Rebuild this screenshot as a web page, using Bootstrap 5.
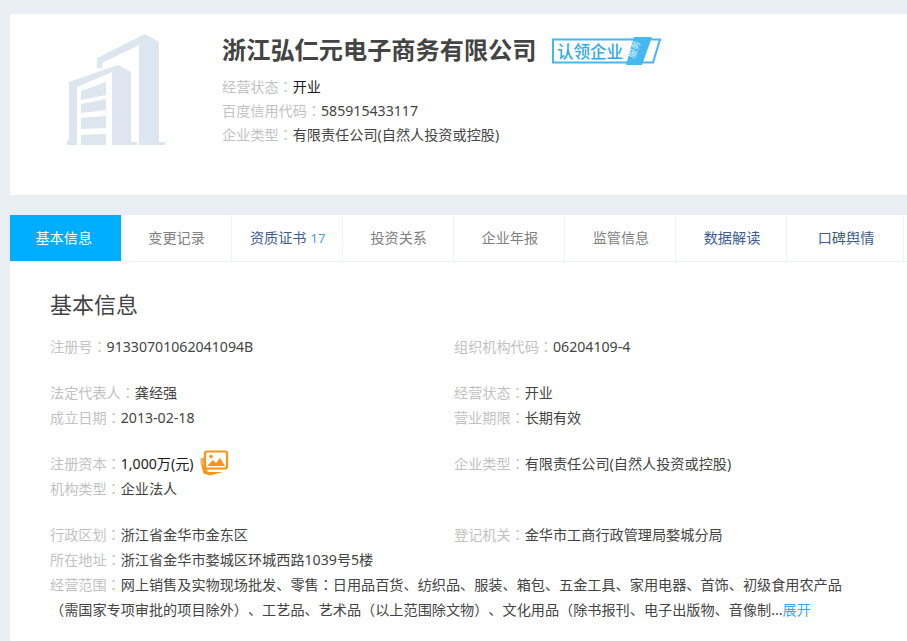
<!DOCTYPE html>
<html>
<head>
<meta charset="utf-8">
<title>浙江弘仁元电子商务有限公司</title>
<link href="https://cdn.jsdelivr.net/npm/bootstrap@5.3.0/dist/css/bootstrap.min.css" rel="stylesheet">
<style>
html,body{height:100%;overflow:hidden}
body{background:#e9eef5;font-family:"Noto Sans","Noto Sans CJK SC",sans-serif;font-size:14.15px;color:#444;line-height:25px;text-spacing-trim:space-all}
.shell{padding:14px 0 0 10px;height:641px;overflow:hidden}
.hero{height:181px;background:#fff;padding:20px 0 0 212px;position:relative}
.hero-logo{position:absolute;left:0;top:0}
.hero-title{font-size:24.2px;font-weight:700;line-height:32px;color:#444;margin:0}
.hero-lines{margin-top:8px;line-height:24px}
.hero-lines>div{height:24px}
.lab{color:#c2c2c2}
.cn{font-family:"Noto Sans CJK TC",sans-serif}
.val-strong{color:#1a1a1a}
.tabbar{margin-top:20px;background:#fff;height:47px;border-bottom:1px solid #eef1f5}
.tabitem{width:111.1px;height:46px;line-height:46px;text-align:center;color:#808080;border-right:1px solid #eff2f6;flex:none;padding-left:2px}
.tabitem.first{width:110.500px;border-right:0;padding:0 3px 0 0}
.tabitem.on{background:#00aeff;color:#fff}
.tabitem.navy{color:#3e5c92}
.tabitem.last{width:116.900px}
.tabcount{color:#4a9ee0;margin-left:4px;font-size:13px}
.sheet{background:#fff;padding:26px 49px 200px 40px}
.sheet-title{font-size:22px;font-weight:400;line-height:32px;color:#444;margin:0 0 14px}
.fact-group{margin-bottom:21px}
.fact-line{height:25px}
.stack{vertical-align:-1px;margin:-6px 0 -6px 5px}
.badge-art{margin-left:15px}
.morelink{color:#3aa6f5;text-decoration:none}
</style>
</head>
<body>
<div class="shell">
  <section class="hero">
    <svg class="hero-logo" width="180" height="150" viewBox="10 14 180 150">
      <g fill="#dde6ee">
        <path d="M97 68V58L145 34l14 8v100h6v3h-26V45L102 63v5z"/>
        <path d="M67 145v-4l2-1V82l49-17 13 7v70h6v3h-25V72L77 87v58z"/>
        <path d="M81 91l25-9v13l-25 5z"/>
        <path d="M81 104l25-5v11l-25 3z"/>
        <path d="M81 118l25-2v12l-25 1z"/>
        <path d="M81 135l25-1v11H81z"/>
      </g>
    </svg>
    <div class="d-flex align-items-center">
      <h1 class="hero-title">浙江弘仁元电子商务有限公司</h1>
      <svg class="badge-art" width="112" height="32" viewBox="0 0 112 32">
        <path d="M2 5.500H109L102 28.500H2z" fill="#fff" stroke="#45b8f2" stroke-width="2"/>
        <path d="M83 3h18L91 31H75z" fill="#45b8f2"/>
        <text x="6" y="23.500" font-size="16.500" font-weight="500" fill="#2fa9ea" font-family="Noto Sans CJK SC">认领企业</text>
        <text font-size="9" fill="#dff3fd" font-family="Noto Sans CJK SC" transform="translate(83 25) rotate(-68)">服务</text>
      </svg>
    </div>
    <div class="hero-lines">
      <div><span class="lab">经营状态<span class="cn">：</span></span><span class="val-strong">开业</span></div>
      <div><span class="lab">百度信用代码<span class="cn">：</span></span>585915433117</div>
      <div><span class="lab">企业类型<span class="cn">：</span></span>有限责任公司(自然人投资或控股)</div>
    </div>
  </section>

  <nav class="tabbar d-flex">
    <div class="tabitem first on">基本信息</div>
    <div class="tabitem">变更记录</div>
    <div class="tabitem navy">资质证书<span class="tabcount">17</span></div>
    <div class="tabitem">投资关系</div>
    <div class="tabitem">企业年报</div>
    <div class="tabitem">监管信息</div>
    <div class="tabitem navy">数据解读</div>
    <div class="tabitem navy last">口碑舆情</div>
  </nav>

  <main class="sheet">
    <h2 class="sheet-title">基本信息</h2>

    <div class="row g-0 fact-group">
      <div class="col-6 fact-line"><span class="lab">注册号<span class="cn">：</span></span>91330701062041094B</div>
      <div class="col-6 fact-line"><span class="lab">组织机构代码<span class="cn">：</span></span>06204109-4</div>
    </div>

    <div class="row g-0 fact-group">
      <div class="col-6 fact-line"><span class="lab">法定代表人<span class="cn">：</span></span>龚经强</div>
      <div class="col-6 fact-line"><span class="lab">经营状态<span class="cn">：</span></span>开业</div>
      <div class="col-6 fact-line"><span class="lab">成立日期<span class="cn">：</span></span>2013-02-18</div>
      <div class="col-6 fact-line"><span class="lab">营业期限<span class="cn">：</span></span>长期有效</div>
    </div>

    <div class="row g-0 fact-group">
      <div class="col-6 fact-line"><span class="lab">注册资本<span class="cn">：</span></span><span class="val-strong">1,000万(元)</span><svg class="stack" width="30" height="26" viewBox="0 0 30 26">
          <path d="M1 9 20 2l2 4L6 11l3 11z" fill="#f9a54b"/>
          <path d="M1 10 4.500 23.500 11 25.500 24 22H9z" fill="#f6941e"/>
          <rect x="6" y="1.500" width="22" height="17" rx="2" fill="#fff" stroke="#f6941e" stroke-width="2.200"/>
          <circle cx="12" cy="6.500" r="1.800" fill="#f6941e"/>
          <path d="M8 16l6-6 3 3 4-5 5 8z" fill="#f6941e"/>
        </svg>
      </div>
      <div class="col-6 fact-line"><span class="lab">企业类型<span class="cn">：</span></span>有限责任公司(自然人投资或控股)</div>
      <div class="col-6 fact-line"><span class="lab">机构类型<span class="cn">：</span></span>企业法人</div>
    </div>

    <div class="row g-0">
      <div class="col-6 fact-line"><span class="lab">行政区划<span class="cn">：</span></span>浙江省金华市金东区</div>
      <div class="col-6 fact-line"><span class="lab">登记机关<span class="cn">：</span></span>金华市工商行政管理局婺城分局</div>
      <div class="col-12 fact-line"><span class="lab">所在地址<span class="cn">：</span></span>浙江省金华市婺城区环城西路1039号5楼</div>
      <div class="col-12"><span class="lab">经营范围<span class="cn">：</span></span>网上销售及实物现场批发、零售<span class="cn">：</span>日用品百货、纺织品、服装、箱包、五金工具、家用电器、首饰、初级食用农产品<br><span class="cn">（</span>需国家专项审批的项目除外<span class="cn">）</span>、工艺品、艺术品<span class="cn">（</span>以上范围除文物<span class="cn">）</span>、文化用品<span class="cn">（</span>除书报刊、电子出版物、音像制...<a class="morelink" href="#">展开</a></div>
    </div>
  </main>
</div>
<script src="https://cdn.jsdelivr.net/npm/bootstrap@5.3.0/dist/js/bootstrap.bundle.min.js"></script>
</body>
</html>
